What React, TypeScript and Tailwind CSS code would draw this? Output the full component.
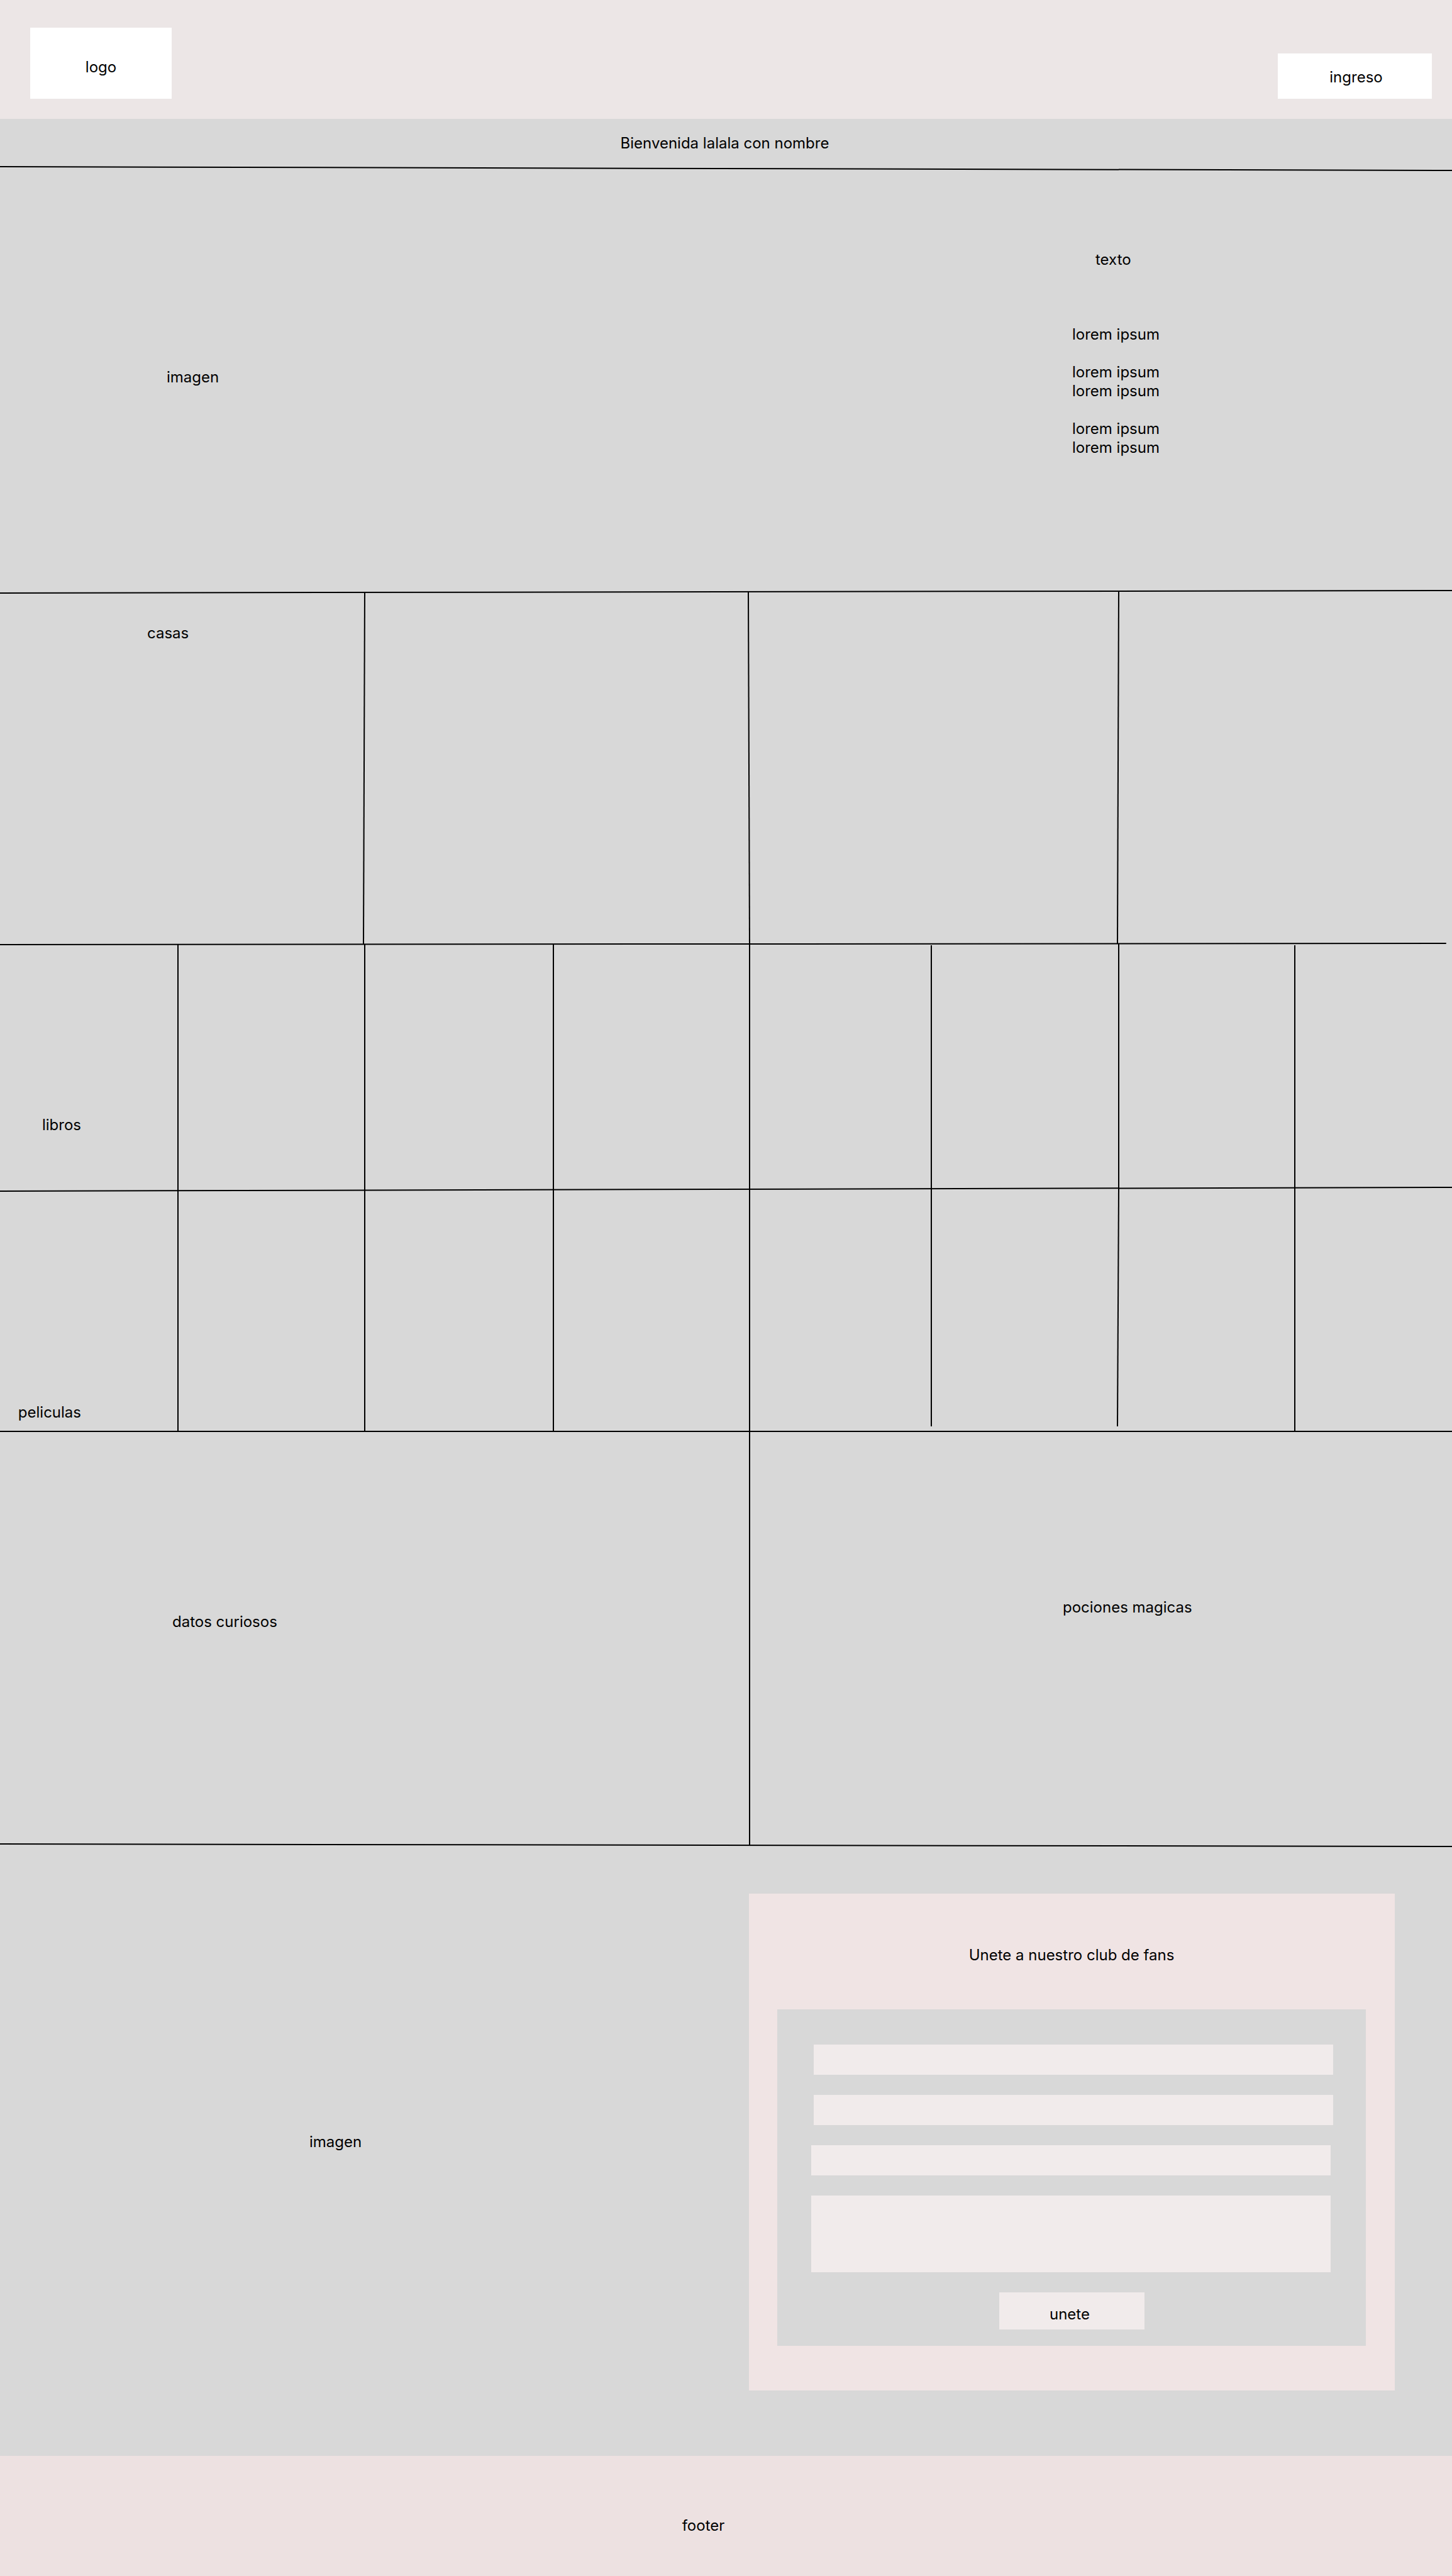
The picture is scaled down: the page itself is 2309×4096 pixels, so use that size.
type Tilt = { from: number; to: number };

/* Hand-drawn horizontal separator; takes no height of its own in the flow. */
function Divider({ from, to, end = "100%" }: Tilt & { end?: string }) {
  return (
    <svg className="relative -my-1 block h-2 w-full" aria-hidden="true">
      <line x1="0" y1={from} x2={end} y2={to} stroke="black" strokeWidth="2" />
    </svg>
  );
}

/* Hand-drawn vertical separator on the right edge of a cell. */
function VerticalRule({ from, to, className = "" }: Tilt & { className?: string }) {
  return (
    <div className={`-mr-1 ml-auto flex w-2 shrink-0 ${className}`}>
      <svg className="block h-full w-2" aria-hidden="true">
        <line x1={from} y1="0" x2={to} y2="100%" stroke="black" strokeWidth="2" />
      </svg>
    </div>
  );
}

type Cell = { rule?: Tilt; ruleClass?: string };

const straight: Tilt = { from: 4, to: 4 };

const casas: Cell[] = [
  { rule: { from: 5, to: 3 } },
  { rule: { from: 3, to: 5 } },
  { rule: { from: 5, to: 3 } },
  {},
];

const libros: Cell[] = [
  { rule: straight },
  { rule: straight },
  { rule: straight },
  { rule: straight },
  { rule: straight, ruleClass: "pt-0.5" },
  { rule: straight },
  { rule: straight, ruleClass: "pt-0.5" },
  {},
];

const peliculas: Cell[] = [
  { rule: straight },
  { rule: straight },
  { rule: straight },
  { rule: straight },
  { rule: straight, ruleClass: "pb-2" },
  { rule: { from: 4, to: 2 }, ruleClass: "pb-2" },
  { rule: straight },
  {},
];

function Cells({ cells, label, labelClass }: { cells: Cell[]; label: string; labelClass: string }) {
  return (
    <>
      {cells.map((cell, i) => (
        <div key={i} className="flex min-w-0">
          {i === 0 && <h2 className={labelClass}>{label}</h2>}
          {cell.rule && <VerticalRule {...cell.rule} className={cell.ruleClass} />}
        </div>
      ))}
    </>
  );
}

const eightColumns = "grid-cols-[283fr_297fr_300fr_312fr_289fr_298fr_280fr_250fr]";

export default function App() {
  return (
    <div className="flex min-h-screen flex-col overflow-x-hidden bg-[#d8d8d8] font-['Inter',sans-serif] text-2xl leading-[30px] text-black">
      <header className="flex items-end justify-between bg-[#ece6e6] px-8 pt-11 pb-8">
        <a href="#inicio" className="ml-4 flex h-[113px] w-[225px] items-center justify-center bg-white pt-3">
          logo
        </a>
        <button type="button" className="h-[72px] w-[245px] bg-white pt-1 pl-1">
          ingreso
        </button>
      </header>

      <main id="inicio" className="flex grow flex-col">
        <h1 className="pt-6 pr-1 pb-[25px] text-center">Bienvenida lalala con nombre</h1>
        <Divider from={1} to={7} />

        <section className="grid h-[673px] grid-cols-[1192fr_1117fr]">
          <p className="pt-[317px] pl-[265px]">imagen</p>
          <div className="pt-[130px] pl-[513px]">
            <h2 className="pl-[37px]">texto</h2>
            <div className="flex flex-col gap-[30px] pt-[89px]">
              <p>lorem ipsum</p>
              <p>
                lorem ipsum
                <br />
                lorem ipsum
              </p>
              <p>
                lorem ipsum
                <br />
                lorem ipsum
              </p>
            </div>
          </div>
        </section>
        <Divider from={6} to={2} />

        <section className="grid h-[560px] grid-cols-[579fr_612fr_587fr_531fr]">
          <Cells cells={casas} label="casas" labelClass="pt-[51px] pl-[234px]" />
        </section>
        <Divider from={5} to={3} end="99.6%" />

        <section className={`grid h-[390px] ${eightColumns}`}>
          <Cells cells={libros} label="libros" labelClass="w-[129px] pt-[273px] text-right" />
        </section>
        <Divider from={7} to={1} />

        <section className={`grid h-[385px] ${eightColumns}`}>
          <Cells cells={peliculas} label="peliculas" labelClass="w-[129px] pt-[340px] text-right" />
        </section>
        <Divider from={4} to={4} />

        <section className="grid h-[658px] grid-cols-[1192fr_1117fr]">
          <div className="flex">
            <h2 className="pt-[288px] pl-[274px]">datos curiosos</h2>
            <VerticalRule from={4} to={4} />
          </div>
          <h2 className="pt-[265px] pl-[498px]">pociones magicas</h2>
        </section>
        <Divider from={2} to={6} />

        <section className="grid grow grid-cols-[1191fr_1118fr]">
          <p className="pt-[457px] pl-[492px]">imagen</p>
          <div className="pt-[77px] pr-[91px] pb-[104px]">
            <div className="bg-[#f0e4e4] pt-[83px] pr-[46px] pb-[71px] pl-[45px]">
              <h2 className="text-center">Unete a nuestro club de fans</h2>
              <form
                className="mt-[71px] flex flex-col gap-8 bg-[#d8d8d8] pt-14 pb-[26px]"
                onSubmit={(e) => e.preventDefault()}
              >
                <div className="flex flex-col gap-8 pr-[52px] pl-[58px]">
                  <input type="text" aria-label="nombre" className="h-12 w-full bg-[#f1ebeb] px-4" />
                  <input type="text" aria-label="apellido" className="h-12 w-full bg-[#f1ebeb] px-4" />
                </div>
                <div className="flex flex-col gap-8 pr-14 pl-[54px]">
                  <input type="email" aria-label="email" className="h-12 w-full bg-[#f1ebeb] px-4" />
                  <textarea aria-label="mensaje" className="block h-[122px] w-full resize-none bg-[#f1ebeb] p-4" />
                </div>
                <button type="submit" className="h-[59px] w-[231px] self-center bg-[#f1ebeb] pt-2.5 pr-1.5">
                  unete
                </button>
              </form>
            </div>
          </div>
        </section>
      </main>

      <footer className="bg-[#ede1e1] pt-24 pr-[72px] pb-[65px] text-center">footer</footer>
    </div>
  );
}
